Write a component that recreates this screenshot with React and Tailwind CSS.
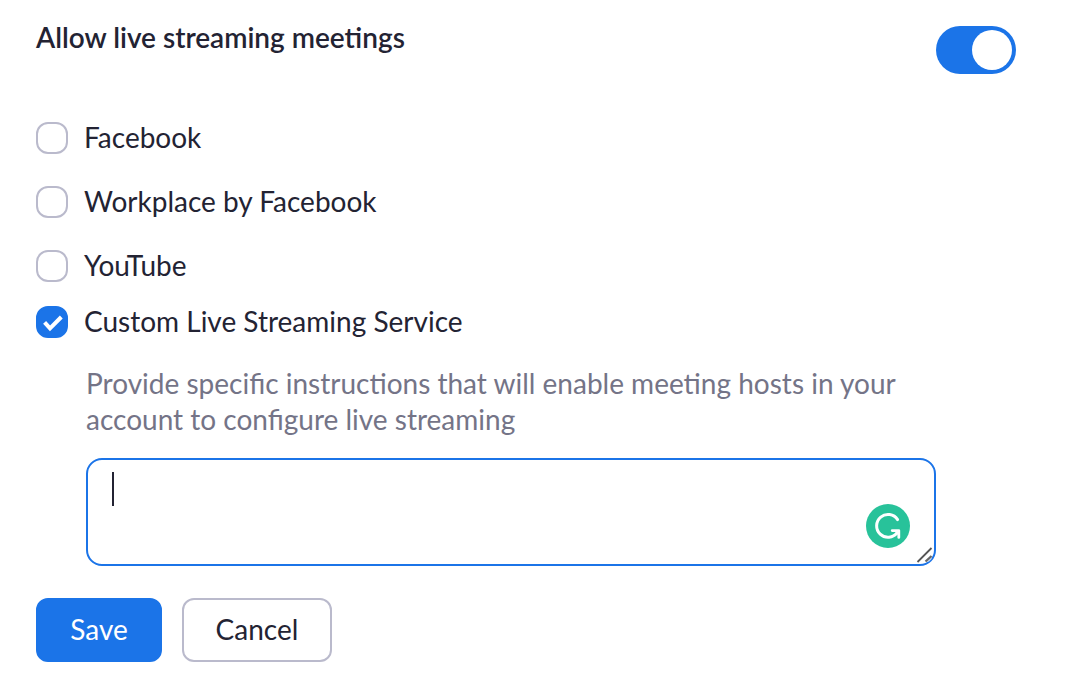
import { useState } from "react";

function CheckOption({ id, label, defaultChecked = false }) {
  return (
    <div className="flex items-center gap-4">
      <span className="grid size-8 shrink-0">
        <input
          id={id}
          type="checkbox"
          defaultChecked={defaultChecked}
          className="peer col-start-1 row-start-1 size-8 cursor-pointer appearance-none rounded-xl border-2 border-[#babacc] bg-white checked:border-[#1b74e8] checked:bg-[#1b74e8]"
        />
        <svg
          viewBox="0 0 32 32"
          aria-hidden="true"
          className="pointer-events-none col-start-1 row-start-1 hidden size-8 peer-checked:block"
        >
          <path d="M8.6 16.4 L14 22.4 L25.3 11" fill="none" stroke="#fff" strokeWidth="4" />
        </svg>
      </span>
      <label htmlFor={id} className="cursor-pointer pb-0.5">
        {label}
      </label>
    </div>
  );
}

function WritingAssistantBadge() {
  return (
    <svg viewBox="0 0 44 44" aria-hidden="true" className="pointer-events-none absolute right-[26px] bottom-[18px] size-11">
      <circle cx="22" cy="22" r="22" fill="#28c29a" />
      <path
        d="M31.6 15.6 A11.4 11.4 0 1 0 31.2 28.6"
        fill="none"
        stroke="#fff"
        strokeWidth="3"
        strokeLinecap="round"
      />
      <path
        d="M26.2 26.6 H32.8 V33.4"
        fill="none"
        stroke="#fff"
        strokeWidth="2.8"
        strokeLinecap="round"
        strokeLinejoin="round"
      />
      <path d="M28 26.6 H32.8 V32 Z" fill="#fff" />
    </svg>
  );
}

function ResizeGrip() {
  return (
    <svg viewBox="0 0 18 18" aria-hidden="true" className="pointer-events-none absolute right-[2px] bottom-[2px] size-[18px]">
      <path d="M10 16 L16 10 L15.5 13 L13 15.5 Z" fill="#c3d7f2" />
      <path d="M1.5 16 L15.5 2" fill="none" stroke="#555" strokeWidth="1.8" />
      <path d="M9.5 15.5 L15.5 10" fill="none" stroke="#666" strokeWidth="2.2" />
    </svg>
  );
}

export default function App() {
  const [enabled, setEnabled] = useState(true);
  const [text, setText] = useState("");

  return (
    <main className="grid min-h-screen grid-cols-[1fr_auto] items-start bg-white pt-[19px] pr-[52px] pb-9 pl-9 font-['Lato',sans-serif] text-[28px] leading-9 text-[#232333]">
      <section>
        <h1 className="font-semibold">Allow live streaming meetings</h1>

        <div className="mt-16 flex flex-col gap-[26px]">
          <CheckOption id="facebook" label="Facebook" />
          <CheckOption id="workplace" label="Workplace by Facebook" />
          <CheckOption id="youtube" label="YouTube" />
        </div>
        <div className="mt-[18px]">
          <CheckOption id="custom" label="Custom Live Streaming Service" defaultChecked />
        </div>

        <div className="mt-6 ml-[50px]">
          <label htmlFor="instructions" className="block text-[#747487]">
            Provide specific instructions that will enable meeting hosts in your account to configure live streaming
          </label>
          <div className="relative mt-[21px]">
            <textarea
              id="instructions"
              value={text}
              onChange={(e) => setText(e.target.value)}
              className="block h-[108px] w-full resize-none rounded-2xl border-2 border-[#1b74e8] bg-white px-6 py-3 outline-none focus:caret-[#232333]"
            />
            {text === "" && (
              <span aria-hidden="true" className="pointer-events-none absolute top-[14px] left-[26px] h-[34px] w-[2px] bg-[#232333]" />
            )}
            <WritingAssistantBadge />
            <ResizeGrip />
          </div>
        </div>

        <div className="mt-8 flex gap-5">
          <button type="button" className="h-16 min-w-[126px] cursor-pointer rounded-xl border-2 border-[#1b74e8] bg-[#1b74e8] px-7 pb-0.5 text-white">
            Save
          </button>
          <button type="button" className="h-16 min-w-[150px] cursor-pointer rounded-xl border-2 border-[#babacc] bg-white px-7 pb-0.5">
            Cancel
          </button>
        </div>
      </section>

      <button
        type="button"
        role="switch"
        aria-checked={enabled}
        aria-label="Allow live streaming meetings"
        onClick={() => setEnabled(!enabled)}
        className="mt-[7px] flex h-12 w-20 cursor-pointer items-center justify-start rounded-full bg-[#babacc] p-1 aria-checked:justify-end aria-checked:bg-[#1b74e8]"
      >
        <span className="size-10 rounded-full bg-white" />
      </button>
    </main>
  );
}
